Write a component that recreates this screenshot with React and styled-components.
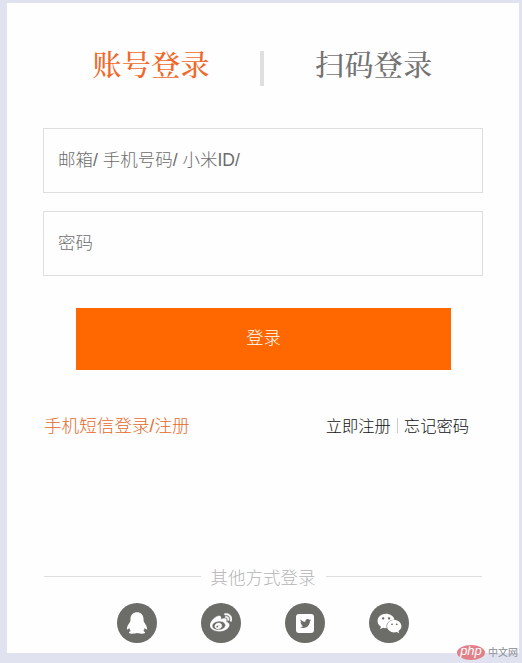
import React from 'react'
import styled, { createGlobalStyle } from 'styled-components'
import { FaTwitter, FaWeibo, FaWeixin } from 'react-icons/fa'


const QqIcon = () => (
  <svg width="22" height="22" viewBox="0 0 22 22" fill="#fff">
    <path d="M11 0.2C7.3 0.2 4.6 2.8 4.5 6.5L4.3 9.4C2.6 11.8 0.7 14.8 0.9 17C1.1 18 2.3 17.6 3.3 16.1C3.5 17.2 3.9 18.1 4.6 18.9C3.4 19.4 2.6 20.2 3 20.9C3.6 21.8 8.8 21.9 11 21C13.2 21.9 18.4 21.8 19 20.9C19.4 20.2 18.6 19.4 17.4 18.9C18.1 18.1 18.5 17.2 18.7 16.1C19.7 17.6 20.9 18 21.1 17C21.3 14.8 19.4 11.8 17.7 9.4L17.5 6.5C17.4 2.8 14.7 0.2 11 0.2Z" />
  </svg>
)

const App = () => {
  return (
    <>
      <GlobalStyle />
      <Page>
        <Card>
          <Tabs>
            <Tab $active>账号登录</Tab>
            <TabLine />
            <Tab>扫码登录</Tab>
          </Tabs>
          <Form>
            <Input type="text" placeholder="邮箱/ 手机号码/ 小米ID/" />
            <Input type="password" placeholder="密码" />
            <Submit type="button">登录</Submit>
          </Form>
          <Links>
            <SmsLink>手机短信登录/注册</SmsLink>
            <Extra>
              <span>立即注册</span>
              <Bar />
              <span>忘记密码</span>
            </Extra>
          </Links>
          <OtherTitle>其他方式登录</OtherTitle>
          <Socials>
            <Social><QqIcon /></Social>
            <Social $size={22}><FaWeibo stroke="#fff" strokeWidth="10" /></Social>
            <Social $size={11}><BirdBox><FaTwitter /></BirdBox></Social>
            <Social $size={25}><FaWeixin /></Social>
          </Socials>
        </Card>
        <Watermark>
          <Php>php</Php>
          <SiteName>中文网</SiteName>
        </Watermark>
      </Page>
    </>
  )
}

const GlobalStyle = createGlobalStyle`
  * {
    box-sizing: border-box;
  }
  body {
    margin: 0;
    font-family: "Liberation Sans", "Noto Sans CJK SC", sans-serif;
    font-weight: 300;
  }
`;

const Page = styled.div`
  position: relative;
  width: 522px;
  height: 663px;
  padding: 3px 3px 10px 7px;
  background: #e0e3ef;
  overflow: hidden;
`;

const Card = styled.div`
  display: flex;
  flex-direction: column;
  height: 650px;
  padding: 0 36px;
  background: #fefefe;
`;

const Tabs = styled.div`
  display: flex;
  justify-content: center;
  align-items: center;
  height: 125px;
  padding-right: 1px;
`;

const Tab = styled.div`
  font-family: "Liberation Serif", "Noto Serif CJK SC", "Noto Sans CJK SC", serif;
  font-size: 29px;
  font-weight: 500;
  line-height: 40px;
  letter-spacing: 0.4px;
  color: ${props => props.$active ? '#f0692a' : '#737373'};
`;

const TabLine = styled.div`
  width: 4px;
  height: 35px;
  margin: 6px 51px 0 50px;
  background: #dfdfdf;
`;

const Form = styled.div`
  display: flex;
  flex-direction: column;
`;

const Input = styled.input`
  width: 440px;
  height: 65px;
  margin-bottom: 18px;
  padding: 0 14px;
  border: 1px solid #dedede;
  border-radius: 0;
  outline: none;
  background: #fefefe;
  font: inherit;
  font-size: 17.5px;

  &::placeholder {
    color: #6c6c6c;
    opacity: 1;
  }
`;

const Submit = styled.button`
  width: 375px;
  height: 62px;
  margin: 14px 0 0 33px;
  padding: 0 0 5px;
  border: none;
  background: #ff6801;
  color: #fff;
  font: inherit;
  font-size: 17.3px;
`;

const Links = styled.div`
  display: flex;
  justify-content: space-between;
  align-items: center;
  height: 30px;
  margin-top: 40px;
  padding: 0 14px 0 1px;
`;

const SmsLink = styled.div`
  padding-bottom: 2px;
  font-size: 17.6px;
  color: #e5692a;
`;

const Extra = styled.div`
  display: flex;
  align-items: center;
  font-size: 16.3px;
  color: #111;
`;

const Bar = styled.i`
  width: 1px;
  height: 15px;
  margin: 0 6px;
  background: #ccc;
`;

const OtherTitle = styled.div`
  display: flex;
  align-items: center;
  height: 26px;
  margin-top: 123px;
  padding: 0 1px;
  font-size: 17.5px;
  color: #b5b5b5;

  &::before,
  &::after {
    content: '';
    flex: 1;
    height: 1px;
    background: #dedede;
  }
  &::before {
    margin-right: 10px;
  }
  &::after {
    margin-left: 10px;
  }
`;

const Socials = styled.div`
  display: flex;
  justify-content: center;
  gap: 44px;
  margin-top: 14px;
`;

const Social = styled.div`
  display: flex;
  justify-content: center;
  align-items: center;
  width: 40px;
  height: 40px;
  border-radius: 50%;
  background: #6c6d68;
  color: #fff;
  font-size: ${props => props.$size || 22}px;
`;

const BirdBox = styled.span`
  display: flex;
  justify-content: center;
  align-items: center;
  width: 18px;
  height: 19px;
  border-radius: 3px;
  background: #fff;
  color: #6c6d68;
`;

/* site mark laid over the corner of the card */
const Watermark = styled.div`
  position: absolute;
  right: 4px;
  bottom: 3px;
  display: flex;
  align-items: center;
  gap: 3px;
`;

const Php = styled.div`
  width: 28px;
  height: 15px;
  border-radius: 50%;
  background: #e18088;
  color: #fff;
  font-size: 13px;
  font-style: italic;
  font-weight: 400;
  line-height: 12px;
  text-align: center;
`;

const SiteName = styled.div`
  font-size: 10px;
  font-weight: 500;
  line-height: 14px;
  color: #999ca5;
`;

export default App
